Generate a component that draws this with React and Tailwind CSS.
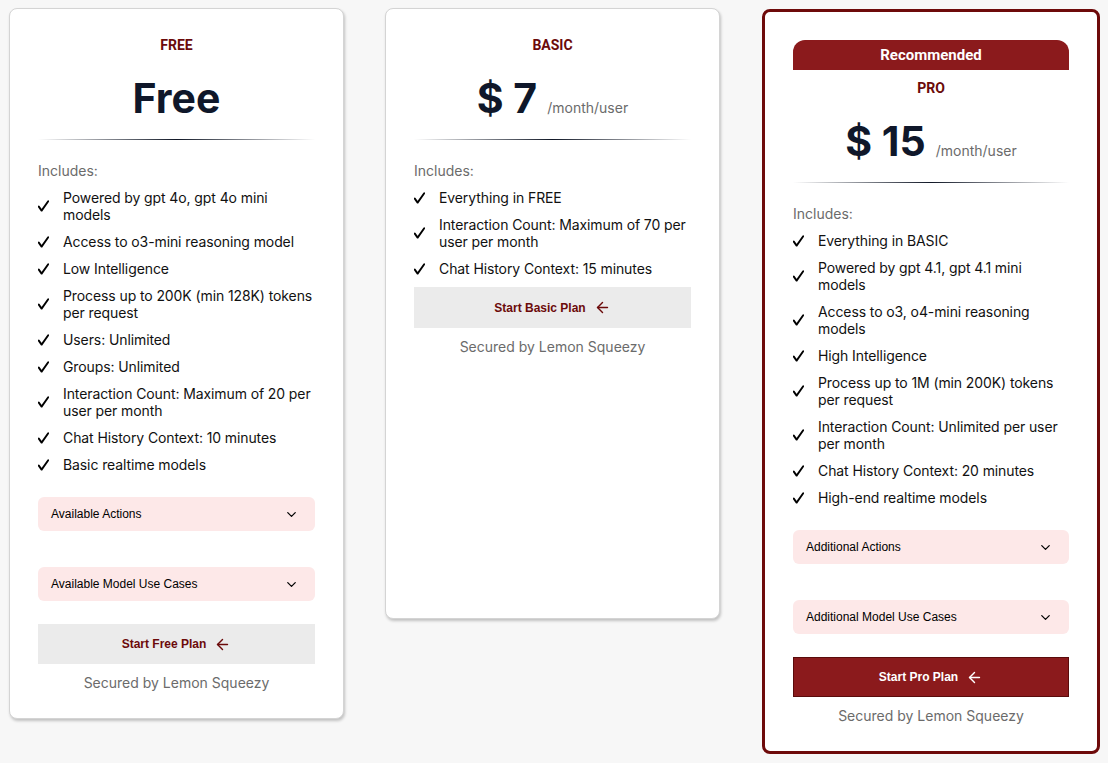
import React from "react";
import { ArrowLeft, ChevronDown } from "lucide-react";

const plans = [
  {
    key: "free",
    label: "FREE",
    price: "Free",
    features: [
      "Powered by gpt 4o, gpt 4o mini models",
      "Access to o3-mini reasoning model",
      "Low Intelligence",
      "Process up to 200K (min 128K) tokens per request",
      "Users: Unlimited",
      "Groups: Unlimited",
      "Interaction Count: Maximum of 20 per user per month",
      "Chat History Context: 10 minutes",
      "Basic realtime models",
    ],
    accordions: ["Available Actions", "Available Model Use Cases"],
    cta: "Start Free Plan",
  },
  {
    key: "basic",
    label: "BASIC",
    price: "$ 7",
    per: "/month/user",
    features: [
      "Everything in FREE",
      "Interaction Count: Maximum of 70 per user per month",
      "Chat History Context: 15 minutes",
    ],
    accordions: [],
    cta: "Start Basic Plan",
  },
  {
    key: "pro",
    label: "PRO",
    price: "$ 15",
    per: "/month/user",
    recommended: true,
    features: [
      "Everything in BASIC",
      "Powered by gpt 4.1, gpt 4.1 mini models",
      "Access to o3, o4-mini reasoning models",
      "High Intelligence",
      "Process up to 1M (min 200K) tokens per request",
      "Interaction Count: Unlimited per user per month",
      "Chat History Context: 20 minutes",
      "High-end realtime models",
    ],
    accordions: ["Additional Actions", "Additional Model Use Cases"],
    cta: "Start Pro Plan",
  },
];

function CheckMark() {
  return (
    <svg width="11" height="12" viewBox="0 0 11 12" className="shrink-0">
      <path d="M0.8 6.6 L3.6 10.6 L10.2 1.2" fill="none" stroke="#000" strokeWidth="1.9" strokeLinecap="round" strokeLinejoin="round" />
    </svg>
  );
}

function Accordion({ title }) {
  return (
    <div className="h-[34px] rounded-md bg-[#fde8e8] flex items-center justify-between pl-[13px] pr-[16px] font-['Liberation_Sans',Arial,sans-serif] text-[12px] text-black">
      <span>{title}</span>
      <ChevronDown size={15} strokeWidth={2} />
    </div>
  );
}

function PlanCard({ plan, className = "" }) {
  const pro = plan.recommended;
  const base = "bg-white rounded-lg px-7 pb-[25px] flex flex-col ";
  return (
    <div
      className={
        base +
        (pro
          ? "border-[3px] border-[#6e0a0a] pt-7 mt-px "
          : "border border-[#d4d4d4] shadow-[1px_2px_3px_rgba(0,0,0,0.22)] pt-[27px] ") +
        className
      }
    >
      {pro && (
        <div className="h-[30px] mb-[9px] rounded-t-[12px] bg-[#8b1a1c] text-white flex items-center justify-center font-['Roboto',sans-serif] font-bold text-[15px]">
          Recommended
        </div>
      )}
      <div className="text-center font-['Roboto',sans-serif] font-bold text-[14px] leading-[18px] text-[#6b0a0a]">
        {plan.label}
      </div>
      <div className="mt-5 flex items-baseline justify-center font-['Inter',sans-serif]">
        <span className="text-[41px] leading-[48px] font-bold text-[#0f172a]">{plan.price}</span>
        {plan.per && <span className="ml-[10px] text-[14px] text-[#6b6b6b]">{plan.per}</span>}
      </div>
      <div className="mt-[17px] h-px bg-gradient-to-r from-transparent via-[#111827] to-transparent" />
      <div className="mt-[21px] font-['Inter',sans-serif] text-[14px] leading-5 text-[#6b6b6b]">Includes:</div>
      <ul className="mt-[8px] flex flex-col gap-[10px] font-['Inter',sans-serif] text-[14px] leading-[17px] tracking-[-0.1px] text-[#111]">
        {plan.features.map((f) => (
          <li key={f} className="flex items-center">
            <span className="w-[25px] shrink-0 flex">
              <CheckMark />
            </span>
            <span>{f}</span>
          </li>
        ))}
      </ul>
      {plan.accordions.length > 0 && (
        <div className="mt-6 flex flex-col gap-9">
          {plan.accordions.map((a) => (
            <Accordion key={a} title={a} />
          ))}
        </div>
      )}
      <button
        className={
          pro
            ? "mt-[23px] h-[40px] bg-[#8b1a1c] border border-[#5a0b0b] text-white flex items-center justify-center gap-2 font-['Liberation_Sans',Arial,sans-serif] font-bold text-[12px]"
            : plan.accordions.length
            ? "mt-[23px] h-[40px] bg-[#ebebeb] text-[#6b0a0a] flex items-center justify-center gap-2 font-['Liberation_Sans',Arial,sans-serif] font-bold text-[12px]"
            : "mt-[10px] h-[41px] bg-[#ebebeb] text-[#6b0a0a] flex items-center justify-center gap-2 font-['Liberation_Sans',Arial,sans-serif] font-bold text-[12px]"
        }
      >
        {plan.cta}
        <ArrowLeft size={17} strokeWidth={2} />
      </button>
      <div className="mt-[9px] text-center font-['Inter',sans-serif] text-[14px] leading-5 text-[#6b6b6b]">
        Secured by Lemon Squeezy
      </div>
    </div>
  );
}

export default function App() {
  return (
    <div className="min-h-screen bg-[#f7f7f7] pl-[9px] pt-[8px]">
      <div className="grid grid-cols-[335px_336px_338px] gap-x-[41px] items-start">
        <PlanCard plan={plans[0]} />
        <PlanCard plan={plans[1]} className="h-[611px] w-[335px]" />
        <PlanCard plan={plans[2]} />
      </div>
    </div>
  );
}
